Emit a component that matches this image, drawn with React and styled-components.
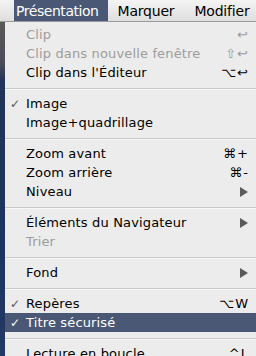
import React from "react";
import styled, { createGlobalStyle } from "styled-components";

const Global = createGlobalStyle`
  html, body { margin: 0; padding: 0; }
  body { width: 256px; height: 356px; overflow: hidden; font-family: "DejaVu Sans", "Liberation Sans", sans-serif; }
  #root { width: 256px; height: 356px; }
`;

const Screen = styled.div`
  width: 256px;
  height: 356px;
  overflow: hidden;
  display: flex;
  flex-direction: column;
  background: #2b3a5c;
`;

const MenuBar = styled.div`
  height: 22px;
  flex: none;
  display: flex;
  align-items: stretch;
  padding-left: 14px;
  background: linear-gradient(#f4f4f4, #dedede);
  border-bottom: 1px solid #9a9a9a;
  box-sizing: border-box;
  white-space: nowrap;
`;

const BarItem = styled.div`
  display: flex;
  align-items: center;
  padding: 0 ${(p) => (p.$active ? "9px" : "10px")} 0 ${(p) => (p.$active ? "2px" : "10px")};
  font-size: 14px;
  color: ${(p) => (p.$active ? "#ffffff" : "#000000")};
  background: ${(p) => (p.$active ? "#4b5875" : "transparent")};
  letter-spacing: ${(p) => (p.$active ? "-0.45px" : "-0.2px")};
`;

const Body = styled.div`
  flex: 1;
  display: flex;
  min-height: 0;
`;

const LeftStrip = styled.div`
  width: 5px;
  flex: none;
  background: linear-gradient(#5a5a5a 0px, #4a4e58 40px, #22345a 60px, #1e3460 200px, #233a66 356px);
`;

const Menu = styled.div`
  flex: 1;
  background: #ececec;
  padding-top: 3px;
  display: flex;
  flex-direction: column;
`;

const Row = styled.div`
  height: 19px;
  flex: none;
  display: flex;
  align-items: center;
  padding: 0 7px 0 0;
  font-size: 13px;
  white-space: nowrap;
  color: ${(p) => (p.$highlight ? "#ffffff" : p.$disabled ? "#9c9c9c" : "#000000")};
  background: ${(p) => (p.$highlight ? "#4b5875" : "transparent")};
`;

const Check = styled.span`
  width: 16px;
  padding-left: 5px;
  flex: none;
  font-size: 12px;
  color: ${(p) => (p.$light ? "#ffffff" : "#555555")};
`;

const Label = styled.span`
  flex: 1;
  letter-spacing: 0.15px;
`;

const Shortcut = styled.span`
  font-size: 13px;
  color: inherit;
  letter-spacing: 1px;
`;

const Arrow = styled.span`
  width: 0;
  height: 0;
  margin-right: 1px;
  border-top: 5px solid transparent;
  border-bottom: 5px solid transparent;
  border-left: 8px solid #5a5a5a;
`;

const Separator = styled.div`
  height: 12px;
  flex: none;
  display: flex;
  align-items: center;
  &::after {
    content: "";
    flex: 1;
    height: 1px;
    background: #c9c9c9;
    box-shadow: 0 1px 0 #f8f8f8;
  }
`;

const items = [
  { label: "Clip", sc: "↩", disabled: true },
  { label: "Clip dans nouvelle fenêtre", sc: "⇧↩", disabled: true },
  { label: "Clip dans l'Éditeur", sc: "⌥↩" },
  { sep: true },
  { label: "Image", check: true },
  { label: "Image+quadrillage" },
  { sep: true },
  { label: "Zoom avant", sc: "⌘+" },
  { label: "Zoom arrière", sc: "⌘-" },
  { label: "Niveau", sub: true },
  { sep: true },
  { label: "Éléments du Navigateur", sub: true },
  { label: "Trier", disabled: true },
  { sep: true },
  { label: "Fond", sub: true },
  { sep: true },
  { label: "Repères", check: true, sc: "⌥W" },
  { label: "Titre sécurisé", check: true, highlight: true },
  { sep: true },
  { label: "Lecture en boucle", sc: "^L" },
];

export default function App() {
  return (
    <Screen>
      <Global />
      <MenuBar>
        <BarItem $active>Présentation</BarItem>
        <BarItem>Marquer</BarItem>
        <BarItem>Modifier</BarItem>
      </MenuBar>
      <Body>
        <LeftStrip />
        <Menu>
          {items.map((it, i) =>
            it.sep ? (
              <Separator key={i} />
            ) : (
              <Row key={i} $disabled={it.disabled} $highlight={it.highlight}>
                <Check $light={it.highlight}>{it.check ? "✓" : ""}</Check>
                <Label>{it.label}</Label>
                {it.sc && <Shortcut>{it.sc}</Shortcut>}
                {it.sub && <Arrow />}
              </Row>
            )
          )}
        </Menu>
      </Body>
    </Screen>
  );
}
